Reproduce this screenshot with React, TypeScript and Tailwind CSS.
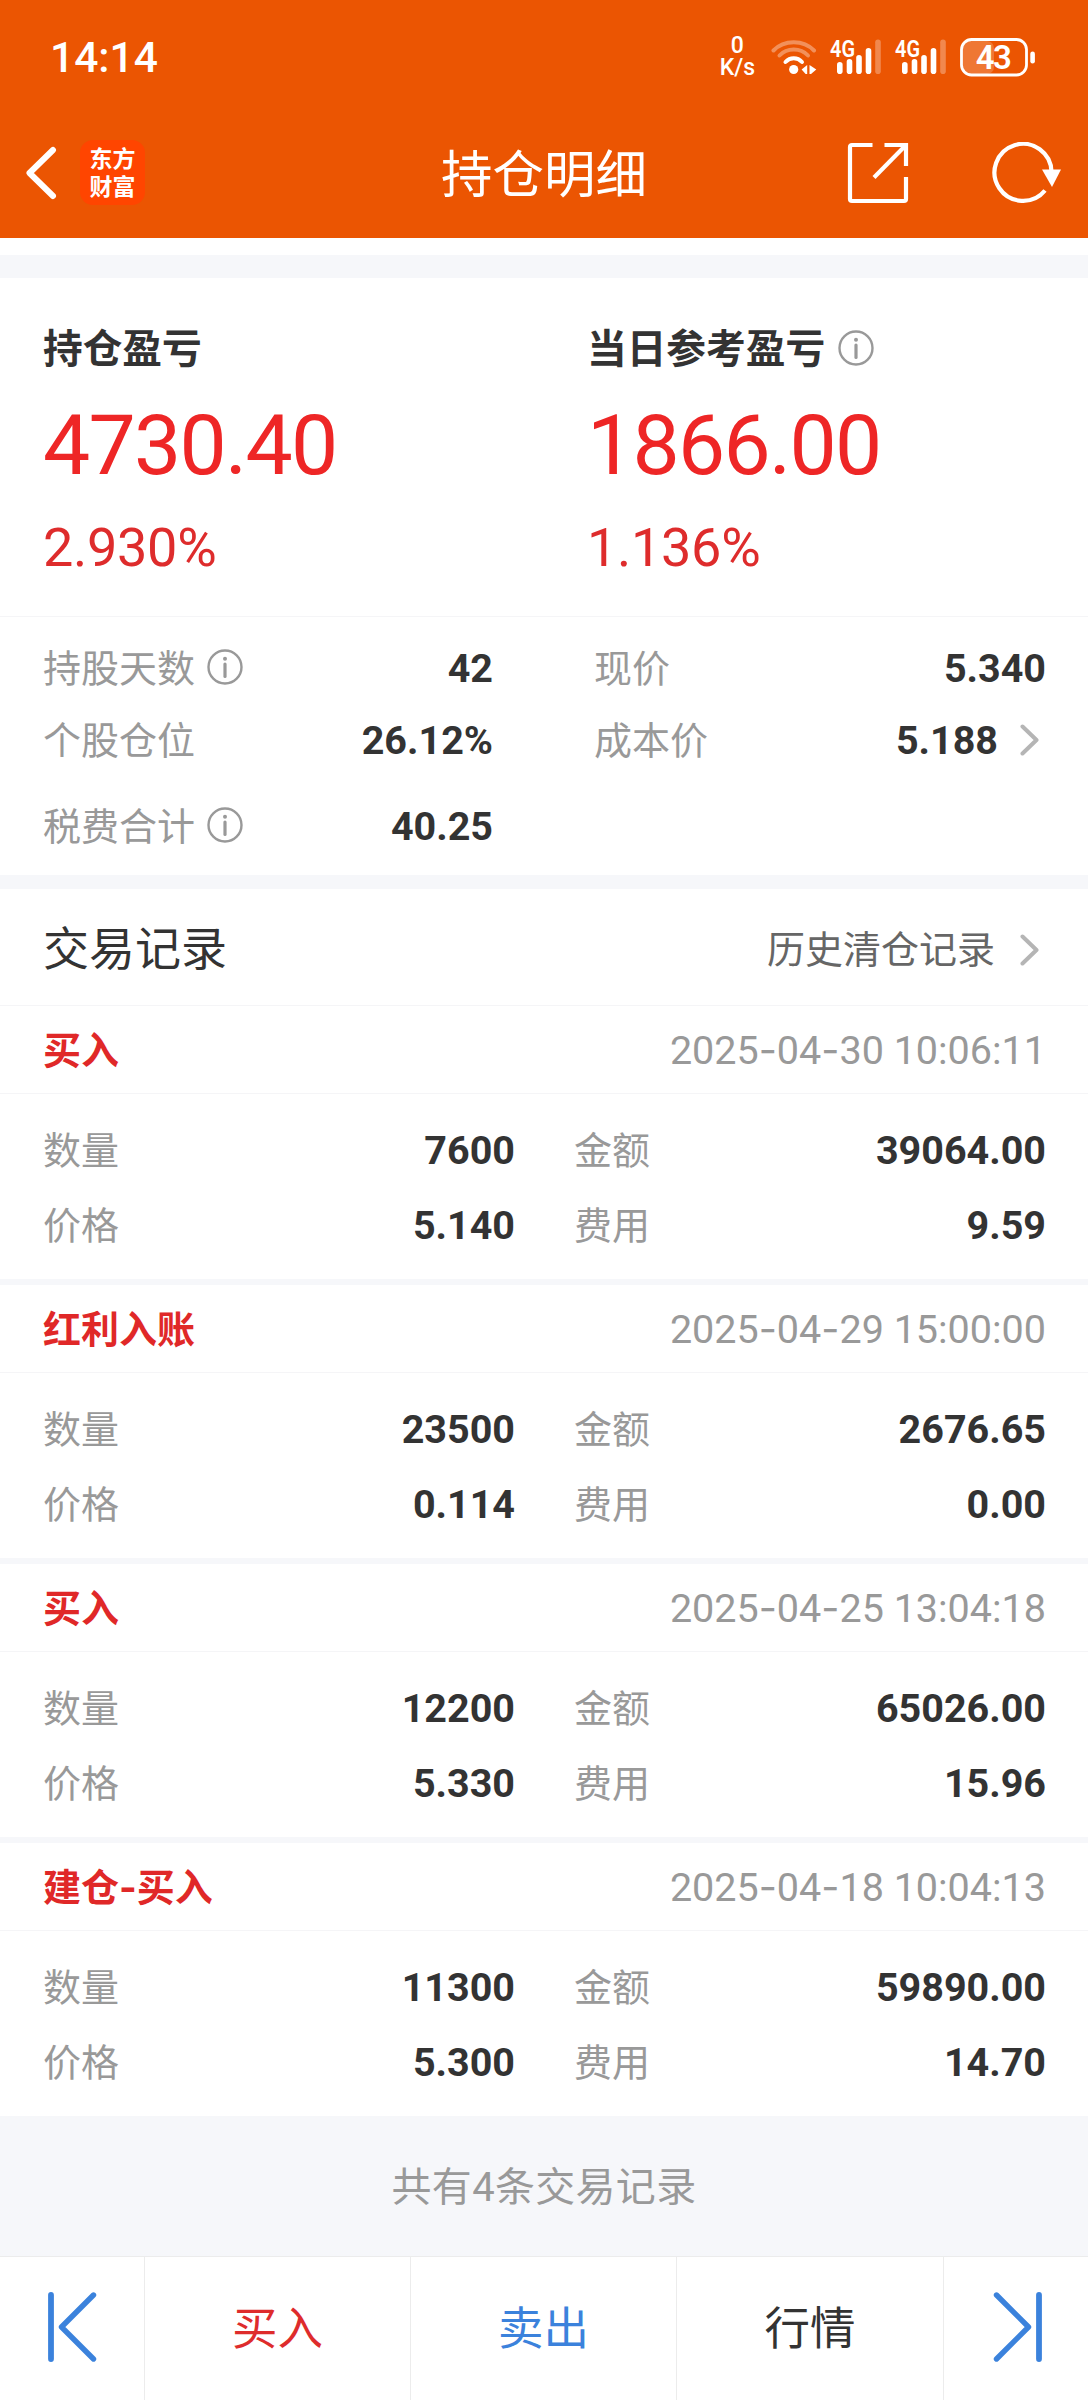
import type { FC, ReactNode } from "react";

type TradeRecord = {
  type: string;
  time: string;
  quantity: string;
  amount: string;
  price: string;
  fee: string;
};

const records: TradeRecord[] = [
  {
    type: "买入",
    time: "2025-04-30 10:06:11",
    quantity: "7600",
    amount: "39064.00",
    price: "5.140",
    fee: "9.59",
  },
  {
    type: "红利入账",
    time: "2025-04-29 15:00:00",
    quantity: "23500",
    amount: "2676.65",
    price: "0.114",
    fee: "0.00",
  },
  {
    type: "买入",
    time: "2025-04-25 13:04:18",
    quantity: "12200",
    amount: "65026.00",
    price: "5.330",
    fee: "15.96",
  },
  {
    type: "建仓-买入",
    time: "2025-04-18 10:04:13",
    quantity: "11300",
    amount: "59890.00",
    price: "5.300",
    fee: "14.70",
  },
];

/* Icons */

const WifiIcon: FC = () => (
  <svg width="46" height="36" viewBox="0 0 46 36" fill="none" strokeLinecap="round" strokeWidth="4">
    <path d="M2.5 11.5C13 0.5 32.5 0.5 43 11.5" stroke="#fff" strokeOpacity="0.35" />
    <path d="M8.5 16.5C16 8.5 29.5 8.5 37 16.5" stroke="#fff" strokeOpacity="0.35" />
    <path d="M14.5 23C19 18 26.5 18 31 23" stroke="#fff" />
    <circle cx="22.7" cy="30.5" r="4.6" fill="#fff" />
    <path d="M36.2 26v9h-1.6l-4-4.5zM38.5 26v9h1.5l5.3-4.5z" fill="#fff" />
  </svg>
);

const SignalIcon: FC = () => (
  <svg width="52" height="36" viewBox="0 0 52 36" className="overflow-visible">
    <text
      x="0"
      y="17.5"
      fill="#fff"
      fontFamily="Roboto, sans-serif"
      fontSize="23.5"
      fontWeight="600"
      textLength="25"
      lengthAdjust="spacingAndGlyphs"
    >
      4G
    </text>
    <g fill="#fff">
      <rect x="7" y="23" width="5.6" height="12" rx="2.8" />
      <rect x="16.7" y="20" width="5.6" height="15" rx="2.8" />
      <rect x="26.2" y="16" width="5.6" height="19" rx="2.8" />
      <rect x="35.7" y="9" width="5.6" height="26" rx="2.8" />
      <rect x="45.2" y="0.5" width="5.6" height="34.5" rx="2.8" opacity="0.3" />
    </g>
  </svg>
);

const BatteryIcon: FC = () => (
  <svg width="76" height="39" viewBox="0 0 76 39">
    <rect x="3" y="3" width="31" height="33" rx="7" fill="#fff" opacity="0.2" />
    <rect x="1.5" y="1.5" width="65" height="35.5" rx="10" fill="none" stroke="#fff" strokeWidth="2.8" />
    <rect x="70.3" y="13.5" width="4.6" height="12" rx="2.3" fill="#fff" />
    <text
      x="33.8"
      y="31"
      fill="#fff"
      fontFamily="Roboto, sans-serif"
      fontSize="33"
      fontWeight="600"
      textAnchor="middle"
      textLength="36"
    >
      43
    </text>
  </svg>
);

const BackIcon: FC = () => (
  <svg width="32" height="54" viewBox="0 0 32 54" fill="none">
    <path
      d="M28 4L4.5 27L28 50"
      stroke="#fff"
      strokeWidth="6"
      strokeLinecap="round"
      strokeLinejoin="round"
    />
  </svg>
);

const ShareIcon: FC = () => (
  <svg width="62" height="62" viewBox="0 0 62 62" fill="none" stroke="#fff" strokeWidth="4.2">
    <path d="M25.5 3H5Q3 3 3 5V57Q3 59 5 59H57Q59 59 59 57V35" />
    <path d="M37.5 3H59V24" />
    <path d="M58.5 3.500L27 35.5" />
  </svg>
);

const RefreshIcon: FC = () => (
  <svg width="70" height="62" viewBox="0 0 70 62" fill="none">
    <path d="M53 48.5A28.5 28.5 0 1 1 59.5 30" stroke="#fff" strokeWidth="4.2" />
    <path d="M50 27.5H69L60 45z" fill="#fff" />
  </svg>
);

const InfoIcon: FC = () => (
  <svg width="36" height="36" viewBox="0 0 36 36" fill="none">
    <circle cx="18" cy="18" r="16.5" stroke="#999" strokeWidth="2.4" />
    <circle cx="18" cy="9.7" r="2" fill="#999" />
    <path d="M18 15V27.5" stroke="#999" strokeWidth="3.2" strokeLinecap="round" />
  </svg>
);

const ChevronRight: FC = () => (
  <svg width="20" height="32" viewBox="0 0 20 32" fill="none">
    <path
      d="M2.5 2.5L16.5 16L2.5 29.5"
      stroke="#b5b5b5"
      strokeWidth="4"
      strokeLinecap="round"
      strokeLinejoin="round"
    />
  </svg>
);

const EdgeArrow: FC<{ flipped?: boolean }> = ({ flipped }) => (
  <svg
    width="50"
    height="72"
    viewBox="0 0 50 72"
    fill="none"
    stroke="#3b82dc"
    strokeLinecap="round"
    strokeLinejoin="round"
    className={flipped ? "-scale-x-100" : ""}
  >
    <path d="M4 4V68" strokeWidth="5.8" />
    <path d="M46.5 4L14.5 36L46.5 68" strokeWidth="5.4" />
  </svg>
);

/* Rows */

const StatRow: FC<{ label: string; info?: boolean; children: ReactNode }> = ({
  label,
  info,
  children,
}) => (
  <div className="flex h-[60px] items-center justify-between">
    <div className="flex items-center gap-3 text-[#999]">
      <span>{label}</span>
      {info && (
        <span className="pb-1">
          <InfoIcon />
        </span>
      )}
    </div>
    <div className="flex items-center text-[39.5px] font-bold text-[#333]">{children}</div>
  </div>
);

const DateTime: FC<{ value: string }> = ({ value }) => {
  const [date, time] = value.split(" ");
  const parts = date.split("-");
  return (
    <span className="text-[39.5px] whitespace-pre text-[#999]">
      {parts[0]}
      <span className="font-[Inter]">-</span>
      {parts[1]}
      <span className="font-[Inter]">-</span>
      {parts[2]} {time}
    </span>
  );
};

const RecordCard: FC<{ record: TradeRecord }> = ({ record }) => {
  const [prefix, suffix] = record.type.split("-");
  return (
    <div className="bg-white">
      <div className="flex h-[88px] items-center justify-between border-b border-[#f5f5f7] pt-[2px] pr-[42px] pl-[43px]">
        <span className="font-bold text-[#e02828]">
          {prefix}
          {suffix && (
            <>
              <span className="font-[Inter]">-</span>
              {suffix}
            </>
          )}
        </span>
        <DateTime value={record.time} />
      </div>
      <div className="flex h-[185px] pt-[27px] pr-[42px] pl-[43px]">
        <div className="flex w-[472px] flex-col gap-[14.5px]">
          <StatRow label="数量">{record.quantity}</StatRow>
          <StatRow label="价格">{record.price}</StatRow>
        </div>
        <div className="ml-[59px] flex flex-1 flex-col gap-[14.5px]">
          <StatRow label="金额">{record.amount}</StatRow>
          <StatRow label="费用">{record.fee}</StatRow>
        </div>
      </div>
    </div>
  );
};

const Profit: FC<{ title: string; value: string; percent: string; info?: boolean }> = ({
  title,
  value,
  percent,
  info,
}) => (
  <div className="w-[545px] pl-[43px]">
    <div className="flex h-[60px] items-center gap-[13px]">
      <span className="pt-1 text-[39.7px] font-bold text-[#333]">{title}</span>
      {info && <InfoIcon />}
    </div>
    <div className="mt-[18px] h-[100px] text-[84px] leading-[100px] tracking-[-1.7px] text-[#ee2626]">
      {value}
    </div>
    <div className="mt-[22px] h-[60px] text-[54px] leading-[60px] tracking-[-0.3px] text-[#de2c2c]">
      {percent}
    </div>
  </div>
);

export default function App() {
  return (
    <div className="h-[2400px] w-[1088px] overflow-hidden bg-[#f6f7fa] font-[Roboto,'Noto_Sans_CJK_SC',sans-serif] text-[38px] leading-none">
      {/* Header */}
      <header className="h-[238px] bg-[#eb5502] text-white">
        <div className="flex h-[114px] items-center justify-between pr-[52px] pl-[50px]">
          <span className="pt-[2px] text-[42.5px] font-medium">14:14</span>
          <div className="flex items-center">
            <div className="mr-[16px] flex flex-col items-center text-[23px] leading-[22px] font-medium">
              <span>0</span>
              <span>K/s</span>
            </div>
            <WifiIcon />
            <div className="ml-[13px] flex gap-[13px]">
              <SignalIcon />
              <SignalIcon />
            </div>
            <div className="ml-[13px]">
              <BatteryIcon />
            </div>
          </div>
        </div>
        <div className="grid h-[117px] grid-cols-3 items-center">
          <div className="flex items-center pl-[25px]">
            <BackIcon />
            <div className="ml-[23px] flex h-[65px] w-[65px] flex-col items-center justify-center rounded-[13px] bg-[#ff4500] pb-[3px] font-['Noto_Sans_CJK_SC',sans-serif] text-[23px] leading-[28px] font-bold">
              <span>东方</span>
              <span>财富</span>
            </div>
          </div>
          <h1 className="pt-[6px] text-center text-[51.5px]">持仓明细</h1>
          <div className="flex items-center justify-end gap-[83px] pr-[26px]">
            <ShareIcon />
            <RefreshIcon />
          </div>
        </div>
      </header>
      <div className="h-[17px] bg-white" />

      {/* Profit summary */}
      <section className="mt-[23px] bg-white">
        <div className="flex h-[339px] border-b border-[#f5f5f7] pt-[40px]">
          <Profit title="持仓盈亏" value="4730.40" percent="2.930%" />
          <Profit title="当日参考盈亏" value="1866.00" percent="1.136%" info />
        </div>
        <div className="flex h-[258px] pt-[22px] pr-[42px] pl-[43px]">
          <div className="w-[450px]">
            <StatRow label="持股天数" info>
              42
            </StatRow>
            <div className="mt-3">
              <StatRow label="个股仓位">26.12%</StatRow>
            </div>
            <div className="mt-[26px]">
              <StatRow label="税费合计" info>
                40.25
              </StatRow>
            </div>
          </div>
          <div className="ml-[101px] flex-1">
            <StatRow label="现价">5.340</StatRow>
            <div className="mt-3">
              <StatRow label="成本价">
                <span className="mr-[22px]">5.188</span>
                <span className="mr-[6px] pb-[2px]">
                  <ChevronRight />
                </span>
              </StatRow>
            </div>
          </div>
        </div>
      </section>

      {/* Trade records */}
      <section className="mt-[14px]">
        <div className="flex h-[117px] items-center justify-between border-b border-[#f5f5f7] bg-white pt-[2px] pr-[48px] pl-[43px]">
          <h2 className="pt-px text-[46px] text-[#333]">交易记录</h2>
          <a href="#" className="flex items-center gap-[25px] pt-[4px] text-[#666]">
            历史清仓记录
            <ChevronRight />
          </a>
        </div>
        <div className="flex flex-col gap-[6px]">
          {records.map((record) => (
            <RecordCard key={record.time} record={record} />
          ))}
        </div>
        <p className="flex h-[140px] items-center justify-center pt-1 text-[40px] tracking-[0.3px] text-[#999]">
          共有4条交易记录
        </p>
      </section>

      {/* Bottom bar */}
      <footer className="flex h-[144px] border-t border-[#ececec] bg-white text-[45.5px]">
        <button className="flex w-[145px] items-center border-r border-[#ececec] pb-[3px] pl-[47px]">
          <EdgeArrow />
        </button>
        <button className="w-[266px] border-r border-[#ececec] pt-[3px] text-[#de2c2c]">买入</button>
        <button className="w-[266px] border-r border-[#ececec] pt-[3px] text-[#3b82dc]">卖出</button>
        <button className="w-[267px] border-r border-[#ececec] pt-[3px] text-[#333]">行情</button>
        <button className="flex flex-1 items-center justify-end pr-[45px] pb-[3px]">
          <EdgeArrow flipped />
        </button>
      </footer>
    </div>
  );
}
